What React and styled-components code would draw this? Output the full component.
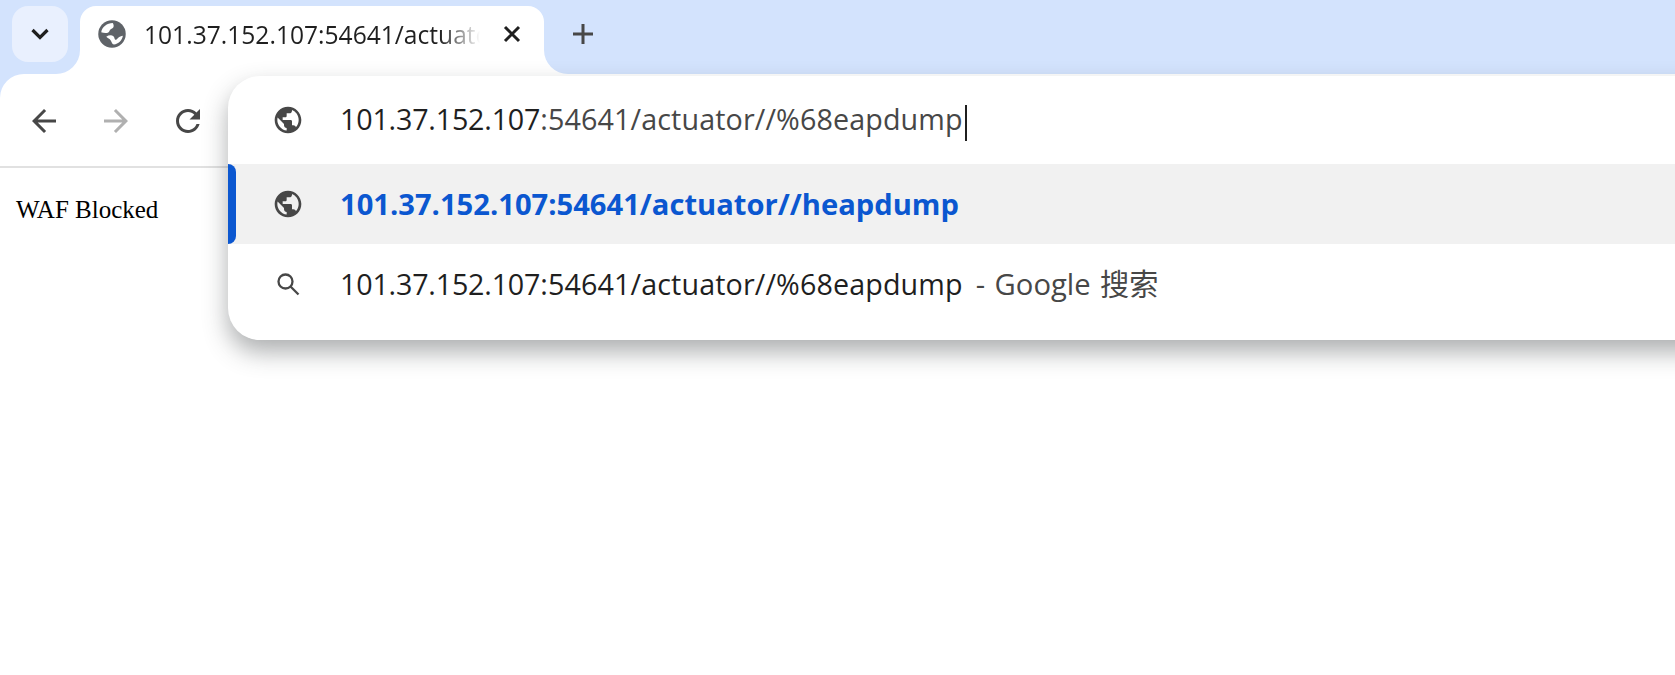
import React from "react";
import styled, { createGlobalStyle } from "styled-components";

const Global = createGlobalStyle`
  html, body { margin: 0; padding: 0; background: #fff; height: 100%; }
  #root { height: 100%; }
`;

const UI_FONT = `"Open Sans", "Noto Sans CJK SC", sans-serif`;

const Window = styled.div`
  position: relative;
  width: 1675px;
  height: 675px;
  overflow: hidden;
  background: #d3e3fd;
  font-family: ${UI_FONT};
`;

const TabStrip = styled.div`
  display: flex;
  align-items: flex-start;
  height: 74px;
  padding: 6px 0 0 12px;
  box-sizing: border-box;
`;

const TabSearchButton = styled.div`
  display: flex;
  align-items: center;
  justify-content: center;
  width: 56px;
  height: 56px;
  border-radius: 16px;
  background: #e9f0fe;
`;

const Tab = styled.div`
  position: relative;
  display: flex;
  align-items: center;
  width: 464px;
  height: 68px;
  margin-left: 12px;
  padding: 0 0 12px 17px;
  box-sizing: border-box;
  background: #fff;
  border-radius: 16px 16px 0 0;
  &::before, &::after {
    content: "";
    position: absolute;
    bottom: 0;
    width: 24px;
    height: 24px;
    background: transparent;
  }
  &::before {
    left: -24px;
    border-bottom-right-radius: 24px;
    box-shadow: 8px 8px 0 8px #fff;
  }
  &::after {
    right: -24px;
    border-bottom-left-radius: 24px;
    box-shadow: -8px 8px 0 8px #fff;
  }
`;

const TabTitle = styled.div`
  width: 336px;
  margin-left: 17px;
  font-size: 24.6px;
  color: #1f1f1f;
  white-space: nowrap;
  overflow: hidden;
  -webkit-mask-image: linear-gradient(to right, #000 88%, transparent 100%);
  mask-image: linear-gradient(to right, #000 88%, transparent 100%);
`;

const TabClose = styled.div`
  display: flex;
  margin-left: 23px;
`;

const NewTabButton = styled.div`
  display: flex;
  margin: 18px 0 0 29px;
`;

const Toolbar = styled.div`
  display: flex;
  align-items: center;
  height: 94px;
  box-sizing: border-box;
  padding: 2px 0 0 26px;
  gap: 36px;
  background: #fff;
  border-bottom: 2px solid #e1e1e1;
  border-radius: 24px 0 0 0;
`;

const ToolIcon = styled.svg`
  width: 36px;
  height: 36px;
  fill: ${(p) => p.$color || "#474747"};
  flex: none;
`;

const Page = styled.div`
  height: 507px;
  background: #fff;
  padding: 27px 0 0 16px;
  box-sizing: border-box;
`;

const BlockedText = styled.div`
  font-family: "Liberation Serif", serif;
  font-size: 25px;
  line-height: 30px;
  color: #000;
`;

const Omnibox = styled.div`
  position: absolute;
  top: 76px;
  left: 228px;
  width: 1520px;
  height: 264px;
  background: #fff;
  border-radius: 32px;
  box-shadow: 0 12px 24px rgba(60, 64, 67, 0.42);
  display: flex;
  flex-direction: column;
`;

const Row = styled.div`
  position: relative;
  display: flex;
  align-items: center;
  gap: 34px;
  height: ${(p) => p.$height}px;
  padding-left: 42px;
  background: ${(p) => (p.$selected ? "#f1f1f1" : "transparent")};
  font-size: 28.7px;
  line-height: 40px;
  white-space: nowrap;
  &::before {
    content: "";
    display: ${(p) => (p.$selected ? "block" : "none")};
    position: absolute;
    left: 0;
    top: 0;
    bottom: 0;
    width: 8px;
    border-radius: 0 8px 8px 0;
    background: #0b57d0;
  }
`;

const IconSlot = styled.div`
  display: flex;
  align-items: center;
  justify-content: center;
  width: 36px;
  height: 36px;
  flex: none;
`;

const Host = styled.span`
  color: #1f1f1f;
  letter-spacing: -0.2px;
`;
const Rest = styled.span`
  color: ${(p) => (p.$dark ? "#1f1f1f" : "#474747")};
  letter-spacing: 0.12px;
`;
const Match = styled.span`
  color: #0b57d0;
  font-weight: 700;
  font-size: 29.15px;
`;
const Caret = styled.span`
  display: inline-block;
  width: 2px;
  height: 36px;
  margin-left: 2px;
  background: #1f1f1f;
  vertical-align: middle;
`;
const Suffix = styled.span`
  color: #474747;
  margin-left: 13px;
  font-size: 29.2px;
  word-spacing: 2px;
`;

const PUBLIC =
  "M12 2C6.48 2 2 6.48 2 12s4.48 10 10 10 10-4.48 10-10S17.52 2 12 2zm-1 17.93c-3.95-.49-7-3.85-7-7.93 0-.62.08-1.21.21-1.79L9 15v1c0 1.1.9 2 2 2v1.93zm6.9-2.54c-.26-.81-1-1.39-1.9-1.39h-1v-3c0-.55-.45-1-1-1H8v-2h2c.55 0 1-.45 1-1V7h2c1.1 0 2-.9 2-2v-.41c2.93 1.19 5 4.06 5 7.41 0 2.08-.8 3.97-2.1 5.39z";

const GlobeIcon = () => (
  <svg width="32" height="32" viewBox="0 0 24 24" fill="#474747">
    <path d={PUBLIC} />
  </svg>
);

const TabGlobe = () => (
  <svg width="30" height="30" viewBox="0 0 24 24" style={{ flex: "none" }}>
    <circle cx="12" cy="12" r="11" fill="#5f6368" />
    <path fill="#fff" d="M3.4 10.5C4 6.5 8 3.2 12.6 3.2c.7 1.2 1 2.3.5 3.4-.5 1-1.6 1.2-2.4 1.7-.8.6-.6 1.6-1.4 2.2-1.8 1.2-4 .6-6 .1z" />
    <path fill="#fff" d="M7.4 14.2c2-1.3 4.4-1.5 5.7-.4 1 .8.7 2.2 1.5 2.7.8.5 1.6-.9 2.4-1.6.9-.8 2.4-1.3 3.7-1.5-.6 3.7-3.6 6.6-7.2 7-1.5-.2-1.7-2-2.5-3.3-.8-1.3-2.4-1.7-3.6-2.9z" />
  </svg>
);

export default function App() {
  return (
    <Window>
      <Global />
      <TabStrip>
        <TabSearchButton>
          <svg width="20" height="14" viewBox="0 0 20 14" fill="none" stroke="#1f1f1f" strokeWidth="3.2">
            <path d="M2.5 3l7.5 7.5L17.5 3" />
          </svg>
        </TabSearchButton>
        <Tab>
          <TabGlobe />
          <TabTitle>101.37.152.107:54641/actuator</TabTitle>
          <TabClose>
            <svg width="18" height="18" viewBox="0 0 18 18" stroke="#1f1f1f" strokeWidth="3">
              <path d="M2 2l14 14M16 2L2 16" />
            </svg>
          </TabClose>
        </Tab>
        <NewTabButton>
          <svg width="20" height="20" viewBox="0 0 20 20" stroke="#474747" strokeWidth="3">
            <path d="M0 10h20M10 0v20" />
          </svg>
        </NewTabButton>
      </TabStrip>
      <Toolbar>
        <ToolIcon viewBox="0 0 24 24">
          <path d="M20 11H7.83l5.59-5.59L12 4l-8 8 8 8 1.41-1.41L7.83 13H20v-2z" />
        </ToolIcon>
        <ToolIcon viewBox="0 0 24 24" $color="#b0b0b0">
          <path d="M4 11h12.17l-5.59-5.59L12 4l8 8-8 8-1.41-1.41L16.17 13H4v-2z" />
        </ToolIcon>
        <ToolIcon viewBox="0 0 24 24">
          <path d="M17.65 6.35C16.2 4.9 14.21 4 12 4c-4.42 0-7.99 3.58-7.99 8s3.57 8 7.99 8c3.73 0 6.84-2.55 7.73-6h-2.08c-.82 2.33-3.04 4-5.65 4-3.31 0-6-2.69-6-6s2.69-6 6-6c1.66 0 3.14.69 4.22 1.78L13 11h7V4l-2.35 2.35z" />
        </ToolIcon>
      </Toolbar>
      <Page>
        <BlockedText>WAF Blocked</BlockedText>
      </Page>
      <Omnibox>
        <Row $height={88}>
          <IconSlot><GlobeIcon /></IconSlot>
          <div>
            <Host>101.37.152.107</Host>
            <Rest>:54641/actuator//%68eapdump</Rest>
            <Caret />
          </div>
        </Row>
        <Row $height={80} $selected>
          <IconSlot><GlobeIcon /></IconSlot>
          <Match>101.37.152.107:54641/actuator//heapdump</Match>
        </Row>
        <Row $height={80}>
          <IconSlot>
            <svg width="24" height="24" viewBox="0 0 24 24" fill="none" stroke="#474747" strokeWidth="2.3">
              <circle cx="9.5" cy="9.5" r="7" />
              <path d="M14.5 14.5L22.5 22.5" />
            </svg>
          </IconSlot>
          <div>
            <Host>101.37.152.107</Host>
            <Rest $dark>:54641/actuator//%68eapdump</Rest>
            <Suffix>- Google 搜索</Suffix>
          </div>
        </Row>
      </Omnibox>
    </Window>
  );
}
